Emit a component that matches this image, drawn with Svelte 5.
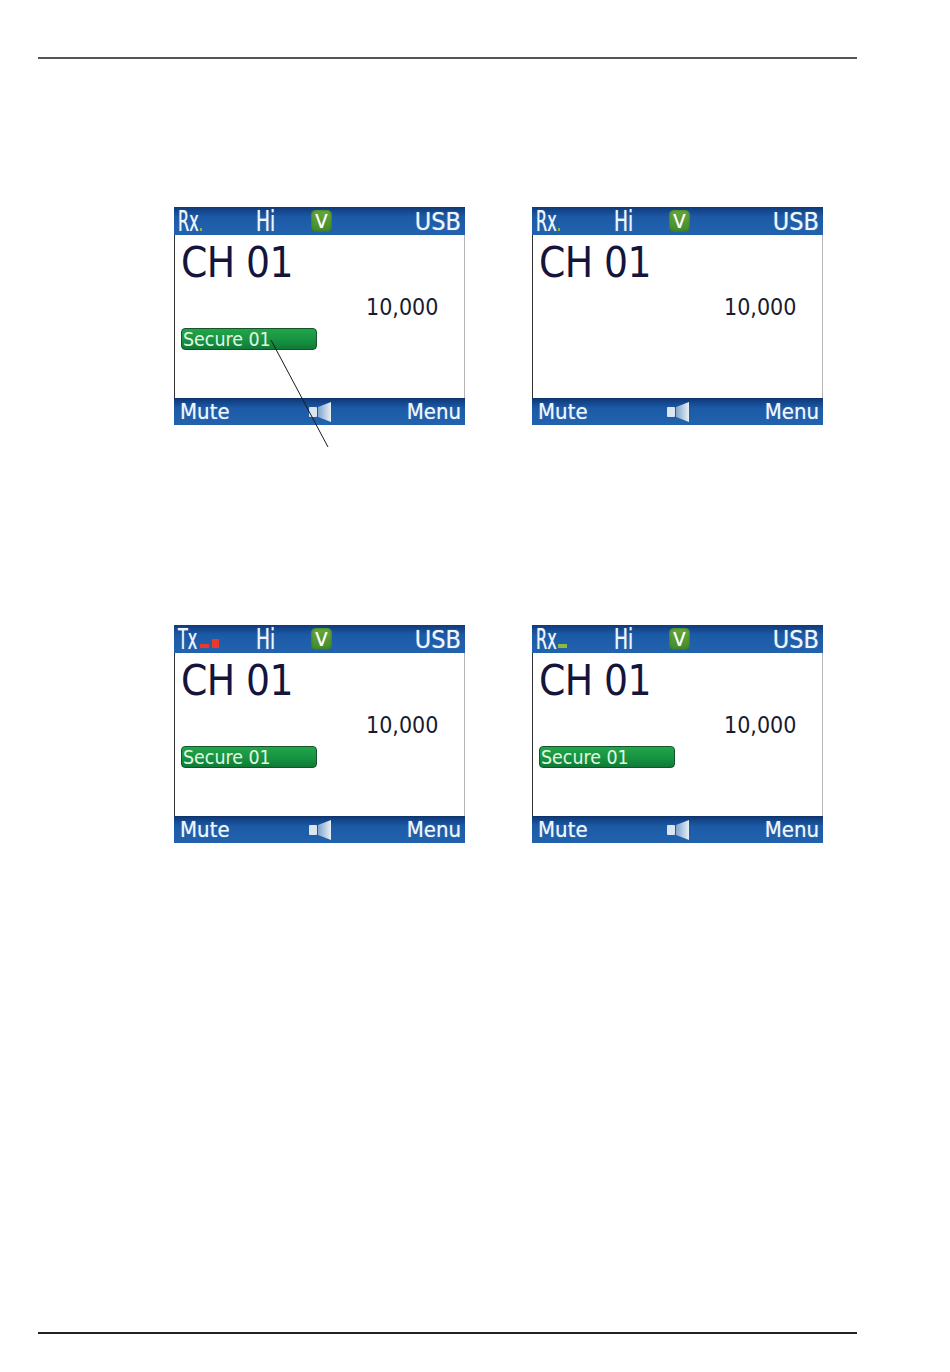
<script>
    const screens = [
        { mode: 'Rx', level: 'dot', secure: true, callout: true },
        { mode: 'Rx', level: 'dot', secure: false },
        { mode: 'Tx', level: 'tx', secure: true },
        { mode: 'Rx', level: 'rx', secure: true }
    ];
</script>

<div class="page">
    <hr class="rule" />

    <div class="grid">
        {#each screens as s}
            <div class="screen">
                <div class="bar top">
                    <span class="mode">
                        <span class="squeeze narrow">{s.mode}</span>
                        {#if s.level === 'tx'}
                            <i class="lvl red low"></i><i class="lvl red high"></i>
                        {:else if s.level === 'rx'}
                            <i class="lvl green low"></i>
                        {:else}
                            <i class="lvl green dot"></i>
                        {/if}
                    </span>
                    <span class="power"><span class="squeeze">Hi</span></span>
                    <span class="voice">V</span>
                    <span class="band">USB</span>
                </div>

                <div class="body">
                    <div class="channel">CH 01</div>
                    <div class="freq">10,000</div>
                    {#if s.secure}
                        <div class="secure">Secure 01</div>
                    {/if}
                </div>

                <div class="bar bottom">
                    <span>Mute</span>
                    <svg class="speaker" width="24" height="22" viewBox="0 0 24 22">
                        <defs>
                            <linearGradient id="cone" x1="0" y1="0" x2="1" y2="0">
                                <stop offset="0" stop-color="#7ea4cf" />
                                <stop offset="1" stop-color="#e8f0f4" />
                            </linearGradient>
                        </defs>
                        <rect x="1" y="6" width="8" height="10" rx="1" fill="#dbe6f0" />
                        <path d="M10 6 L23 1 L23 21 L10 16 Z" fill="url(#cone)" />
                    </svg>
                    <span>Menu</span>
                </div>

                {#if s.callout}
                    <svg class="callout" width="62" height="112" viewBox="0 0 62 112">
                        <path d="M2 2 L59 109" stroke="#1a1a1a" stroke-width="1" fill="none" />
                    </svg>
                {/if}
            </div>
        {/each}
    </div>

    <hr class="rule foot" />
</div>

<style>
    :global(body) {
        margin: 0;
        background: #fff;
    }

    .page {
        width: 950px;
        height: 1372px;
        padding-top: 57px;
        box-sizing: border-box;
        overflow: hidden;
        font-family: "DejaVu Sans Condensed", "DejaVu Sans", sans-serif;
        font-stretch: condensed;
    }

    .rule {
        width: 819px;
        height: 2px;
        margin: 0 0 0 38px;
        border: 0;
        background: #555;
    }

    .rule.foot {
        margin-top: 489px;
        background: #222;
    }

    .grid {
        display: grid;
        grid-template-columns: 291px 291px;
        column-gap: 67px;
        row-gap: 200px;
        margin: 148px 0 0 174px;
    }

    .screen {
        position: relative;
        height: 218px;
        display: flex;
        flex-direction: column;
        box-sizing: border-box;
        border-left: 1px solid #333;
        border-right: 1px solid #b5b5b5;
    }

    .bar {
        display: flex;
        align-items: center;
        margin: 0 -1px;
        color: #eef6fb;
        text-shadow: 0 0 1px rgba(238, 246, 251, 0.6);
        background: linear-gradient(#0f3a7a, #1c5aa6 35%, #2263ae);
    }

    .top {
        height: 28px;
        flex: none;
        font-size: 25px;
    }

    .bottom {
        height: 27px;
        flex: none;
        justify-content: space-between;
        padding: 0 4px 2px 6px;
        font-size: 22px;
        border-top: 1px solid #0f3469;
        box-sizing: border-box;
    }

    .mode {
        width: 82px;
        height: 28px;
        padding-left: 4px;
        box-sizing: border-box;
        display: flex;
        align-items: flex-start;
        position: relative;
    }

    .squeeze {
        display: inline-block;
        font-size: 28px;
        line-height: 30px;
        transform: scaleX(0.74);
        transform-origin: left center;
    }

    .squeeze.narrow {
        transform: scaleX(0.64);
    }

    .power {
        width: 55px;
        height: 28px;
    }

    .lvl {
        position: absolute;
        bottom: 5px;
    }

    .red {
        background: #e8392c;
    }

    .green {
        background: #8abb3a;
    }

    .dot {
        left: 26px;
        bottom: 4px;
        width: 2px;
        height: 3px;
    }

    .low {
        left: 26px;
        width: 9px;
        height: 4px;
    }

    .red.high {
        left: 38px;
        width: 7px;
        height: 9px;
    }

    .voice {
        width: 21px;
        height: 22px;
        line-height: 22px;
        text-align: center;
        font-family: "DejaVu Sans", sans-serif;
        font-size: 20px;
        color: #fff;
        border-radius: 5px;
        background: linear-gradient(#69a838, #418a2a);
        box-shadow: inset 0 0 3px #2a6a24;
    }

    .band {
        margin-left: auto;
        padding-right: 4px;
    }

    .body {
        flex: 1;
        padding: 5px 0 0 6px;
        background: #fff;
        display: flex;
        flex-direction: column;
    }

    .channel {
        font-size: 42px;
        line-height: 46px;
        letter-spacing: -0.6px;
        color: #14143c;
    }

    .freq {
        font-size: 23px;
        line-height: 28px;
        margin: 7px 0 0 185px;
        color: #1a1a2e;
    }

    .secure {
        width: 136px;
        height: 22px;
        line-height: 21px;
        margin-top: 7px;
        padding-left: 1px;
        box-sizing: border-box;
        font-size: 19.4px;
        color: #e4f7e0;
        border: 1px solid #14532b;
        border-radius: 4px;
        background: linear-gradient(#22a54a, #169140 60%, #0f7a36);
    }

    .speaker {
        display: block;
        margin: 2px 0 0 4px;
    }

    .callout {
        position: absolute;
        left: 94px;
        top: 131px;
    }
</style>
